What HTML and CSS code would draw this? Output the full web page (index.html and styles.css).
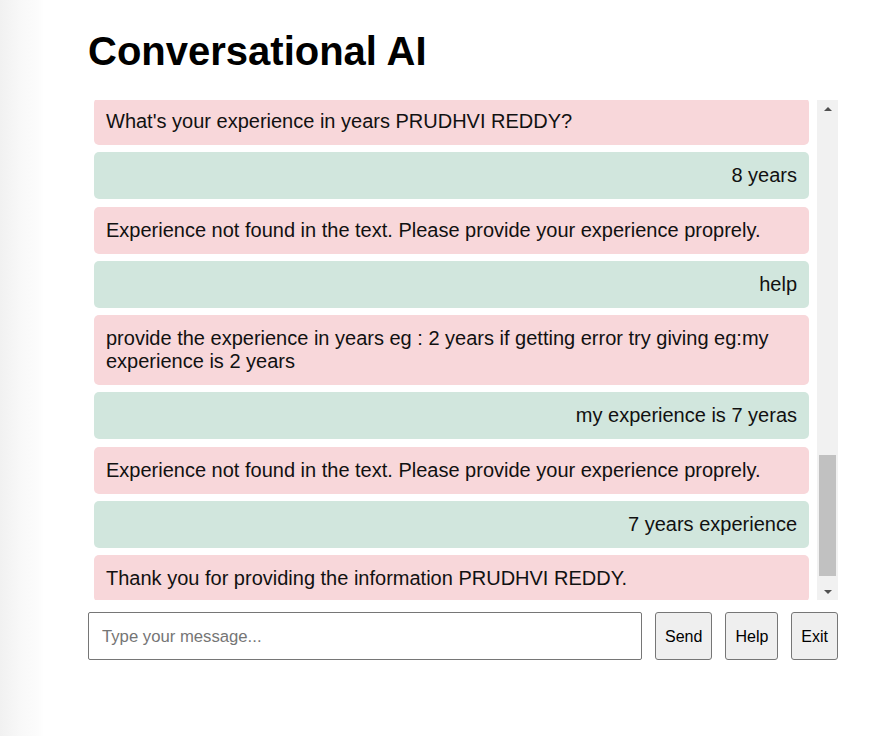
FILE: index.html
```html
<!DOCTYPE html>
<html lang="en">
<head>
<meta charset="utf-8">
<title>Conversational AI</title>
<link rel="stylesheet" href="styles.css">
</head>
<body>
<main class="app">
  <h1 class="title">Conversational AI</h1>
  <section class="chat">
    <div class="viewport">
      <div class="messages">
        <div class="msg bot">What's your experience in years PRUDHVI REDDY?</div>
        <div class="msg user">8 years</div>
        <div class="msg bot">Experience not found in the text. Please provide your experience proprely.</div>
        <div class="msg user">help</div>
        <div class="msg bot">provide the experience in years eg : 2 years if getting error try giving eg:my experience is 2 years</div>
        <div class="msg user">my experience is 7 yeras</div>
        <div class="msg bot">Experience not found in the text. Please provide your experience proprely.</div>
        <div class="msg user">7 years experience</div>
        <div class="msg bot">Thank you for providing the information PRUDHVI REDDY.</div>
      </div>
    </div>
    <div class="scrollbar" aria-hidden="true">
      <div class="arrow up"></div>
      <div class="track">
        <div class="thumb"></div>
      </div>
      <div class="arrow down"></div>
    </div>
  </section>
  <form class="composer" onsubmit="return false">
    <input class="field" type="text" placeholder="Type your message...">
    <button class="btn" type="button">Send</button>
    <button class="btn" type="button">Help</button>
    <button class="btn" type="button">Exit</button>
  </form>
</main>
</body>
</html>
```

FILE: styles.css
```css
* { box-sizing: border-box; }

html, body {
  margin: 0;
  height: 100%;
}

body {
  font-family: "Liberation Sans", Arial, sans-serif;
  color: #000;
  background: linear-gradient(to right, #f1f1f1 0px, #f8f8f8 20px, #fcfcfc 38px, #ffffff 44px);
}

.app {
  width: 750px;
  margin-left: 88px;
  padding-top: 28px;
}

.title {
  margin: 0 0 26px 0;
  font-size: 40px;
  font-weight: bold;
  line-height: 46px;
  color: #000;
}

.chat {
  display: flex;
  height: 500px;
}

.viewport {
  flex: 1;
  overflow: hidden;
  display: flex;
  flex-direction: column;
  justify-content: flex-end;
  padding: 0 8px 0 6px;
}

.messages {
  display: flex;
  flex-direction: column;
  gap: 7.25px;
  margin-bottom: -2px;
}

.msg {
  flex: none;
  padding: 12px;
  border-radius: 5px;
  font-size: 20px;
  line-height: 23px;
  color: #111;
}

.bot {
  background: #f8d7da;
  text-align: left;
}

.user {
  background: #d1e6dd;
  text-align: right;
}

.scrollbar {
  width: 21px;
  background: #f1f1f1;
  display: flex;
  flex-direction: column;
}

.arrow {
  height: 17px;
  flex: none;
  display: flex;
  align-items: center;
  justify-content: center;
}

.arrow::before {
  content: "";
  width: 0;
  height: 0;
  border-left: 4px solid transparent;
  border-right: 4px solid transparent;
}

.arrow.up::before {
  border-bottom: 4px solid #505050;
}

.arrow.down::before {
  border-top: 4px solid #505050;
}

.track {
  flex: 1;
  display: flex;
  flex-direction: column;
  justify-content: flex-end;
  padding: 0 2px 7px 2px;
}

.thumb {
  height: 121px;
  background: #c1c1c1;
}

.composer {
  display: flex;
  gap: 13px;
  margin: 12px 0 0 0;
  height: 48px;
}

.field {
  flex: 1;
  min-width: 0;
  height: 48px;
  border: 1px solid #767676;
  border-radius: 2px;
  padding: 1px 13px 0 13px;
  font-family: "Liberation Sans", Arial, sans-serif;
  font-size: 16.7px;
  color: #000;
  background: #fff;
}

.field::placeholder {
  color: #757575;
}

.btn {
  flex: none;
  height: 48px;
  padding: 1px 9px 0 9px;
  border: 1px solid #767676;
  border-radius: 3px;
  background: #efefef;
  font-family: "Liberation Sans", Arial, sans-serif;
  font-size: 16px;
  color: #000;
}
```
